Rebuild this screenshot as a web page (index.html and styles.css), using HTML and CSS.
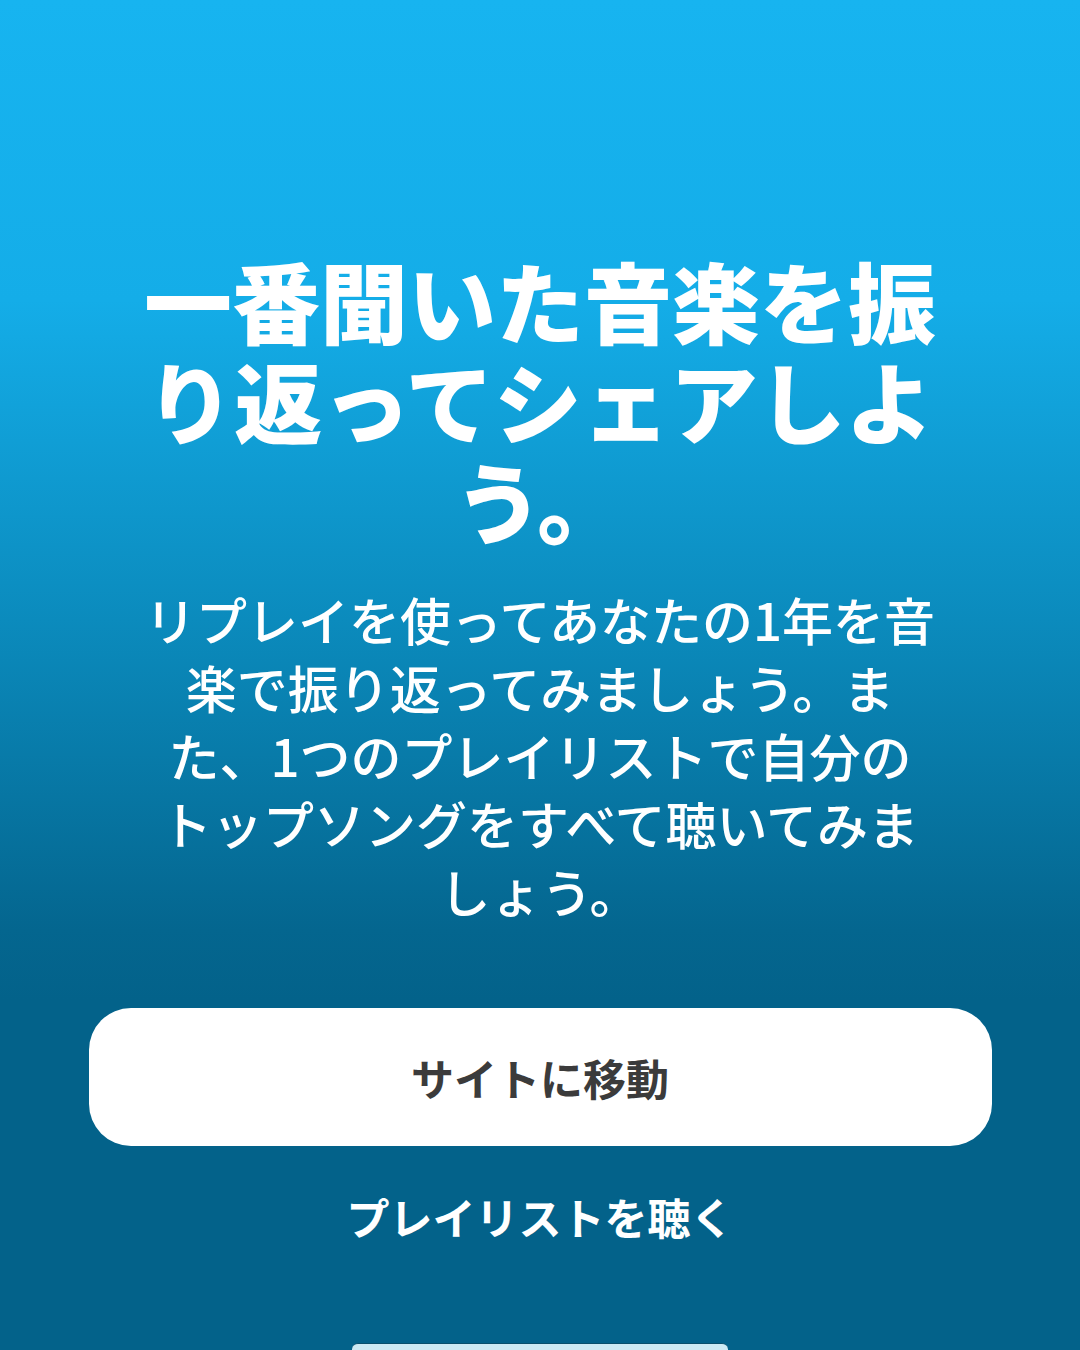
FILE: index.html
```
<!DOCTYPE html>
<html lang="ja">
<head>
<meta charset="utf-8">
<title>リプレイ</title>
<link rel="stylesheet" href="styles.css">
</head>
<body>
<main class="screen">
  <h1 class="title">一番聞いた音楽を振り返ってシェアしよう。</h1>
  <p class="desc">リプレイを使ってあなたの1年を音楽で振り返ってみましょう。また、1つのプレイリストで自分のトップソングをすべて聴いてみましょう。</p>
  <button class="primary">サイトに移動</button>
  <a class="link">プレイリストを聴く</a>
  <div class="sheet"></div>
</main>
</body>
</html>
```
FILE: styles.css
```
html, body {
  margin: 0;
  padding: 0;
}
body {
  width: 1080px;
  height: 1350px;
  overflow: hidden;
  font-family: "Noto Sans CJK JP", "Noto Sans", sans-serif;
}
.screen {
  height: 1350px;
  box-sizing: border-box;
  padding-top: 249px;
  display: flex;
  flex-direction: column;
  align-items: center;
  overflow: hidden;
  background: linear-gradient(180deg, #17b4f0 0px, #14ade8 300px, #0b8bbd 620px, #04668f 930px, #03628a 1000px, #03628a 1350px);
  color: #ffffff;
}
.screen > * {
  flex-shrink: 0;
}
.title {
  margin: 0;
  width: 798px;
  font-size: 88px;
  line-height: 100px;
  font-weight: 900;
  text-align: center;
  line-break: strict;
}
.desc {
  margin: 36px 0 0;
  width: 798px;
  font-size: 51px;
  line-height: 68px;
  font-weight: 500;
  text-align: center;
  line-break: strict;
}
.primary {
  margin-top: 83px;
  width: 903px;
  height: 138px;
  border: none;
  border-radius: 42px;
  background: #ffffff;
  color: #3b3b3b;
  font-family: "Noto Sans CJK JP", "Noto Sans", sans-serif;
  font-size: 43px;
  font-weight: 700;
}
.link {
  margin-top: 40px;
  font-size: 43px;
  line-height: 60px;
  font-weight: 700;
  color: #ffffff;
}
.sheet {
  margin-top: 97px;
  width: 376px;
  height: 20px;
  border-radius: 6px 6px 0 0;
  border-top: 1px solid #0a4f6c;
  background: #cdeaf4;
}
```
